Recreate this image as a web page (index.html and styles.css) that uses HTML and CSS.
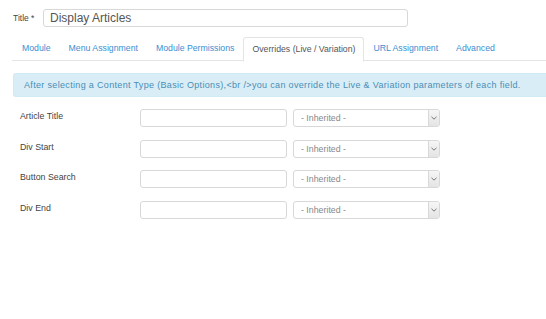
FILE: index.html
```html
<!DOCTYPE html>
<html lang="en">
<head>
    <meta charset="UTF-8">
    <title>Display Articles</title>
    <link rel="stylesheet" href="styles.css">
</head>
<body>

    <div class="title-row">
        <label for="title">Title *</label>
        <input type="text" id="title" class="title-input" value="Display Articles">
    </div>

    <ul class="tabs">
        <li>Module</li>
        <li>Menu Assignment</li>
        <li>Module Permissions</li>
        <li class="active">Overrides (Live / Variation)</li>
        <li>URL Assignment</li>
        <li>Advanced</li>
    </ul>

    <div class="alert">After selecting a Content Type (Basic Options),&lt;br /&gt;you can override the Live &amp; Variation parameters of each field.</div>

    <div class="fields">
        <div class="field">
            <label>Article Title</label>
            <input type="text" class="box">
            <div class="select"><span>- Inherited -</span><span class="arrow"><svg width="6" height="4" viewBox="0 0 6 4"><path d="M0.5 0.8 L3 3.2 L5.5 0.8" fill="none" stroke="#777" stroke-width="1"/></svg></span></div>
        </div>
        <div class="field">
            <label>Div Start</label>
            <input type="text" class="box">
            <div class="select"><span>- Inherited -</span><span class="arrow"><svg width="6" height="4" viewBox="0 0 6 4"><path d="M0.5 0.8 L3 3.2 L5.5 0.8" fill="none" stroke="#777" stroke-width="1"/></svg></span></div>
        </div>
        <div class="field">
            <label>Button Search</label>
            <input type="text" class="box">
            <div class="select"><span>- Inherited -</span><span class="arrow"><svg width="6" height="4" viewBox="0 0 6 4"><path d="M0.5 0.8 L3 3.2 L5.5 0.8" fill="none" stroke="#777" stroke-width="1"/></svg></span></div>
        </div>
        <div class="field">
            <label>Div End</label>
            <input type="text" class="box">
            <div class="select"><span>- Inherited -</span><span class="arrow"><svg width="6" height="4" viewBox="0 0 6 4"><path d="M0.5 0.8 L3 3.2 L5.5 0.8" fill="none" stroke="#777" stroke-width="1"/></svg></span></div>
        </div>
    </div>

</body>
</html>
```

FILE: styles.css
```css
body {
    font-family: "Liberation Sans", Arial, sans-serif;
    background-color: #fff;
    color: #444;
    margin: 0;
    padding: 0;
    font-size: 8.8px;
}
.title-row {
    display: flex;
    align-items: center;
    padding: 9px 0 0 13px;
}
.title-row label {
    width: 30px;
    font-size: 8.5px;
    color: #444;
}
.title-input {
    box-sizing: border-box;
    width: 365px;
    height: 18px;
    padding: 0 6px;
    border: 1px solid #d8d8d8;
    border-radius: 3px;
    font-family: inherit;
    font-size: 12px;
    color: #555;
    outline: none;
}
.tabs {
    display: flex;
    list-style: none;
    margin: 10px 0 0 12px;
    padding: 0 0 0 1px;
    border-bottom: 1px solid #e4e4e4;
    height: 23px;
    font-size: 8.72px;
}
.tabs li {
    padding: 0 9px;
    line-height: 23px;
    color: #3a8fd2;
    white-space: nowrap;
}
.tabs li.active {
    color: #555;
    background-color: #fff;
    border: 1px solid #e4e4e4;
    border-bottom-color: #fff;
    border-radius: 3px 3px 0 0;
    padding: 0 8px;
    line-height: 22px;
    height: 23px;
}
.alert {
    margin: 12px 0 0 13px;
    height: 24px;
    line-height: 23px;
    padding-left: 10px;
    background-color: #d9edf7;
    border: 1px solid #d2eaf5;
    border-right: none;
    border-radius: 3px 0 0 3px;
    color: #4a8db5;
    font-size: 9px;
    letter-spacing: 0.33px;
    white-space: nowrap;
    overflow: hidden;
    box-sizing: border-box;
}
.fields {
    padding: 12px 0 0 20px;
}
.field {
    display: flex;
    align-items: flex-start;
    margin-bottom: 12.6px;
}
.field label {
    width: 120px;
    padding-top: 2px;
    color: #444;
}
.box {
    box-sizing: border-box;
    width: 147px;
    height: 18px;
    border: 1px solid #d8d8d8;
    border-radius: 3px;
    outline: none;
    margin: 0;
}
.select {
    box-sizing: border-box;
    display: flex;
    align-items: center;
    justify-content: space-between;
    width: 147px;
    height: 18px;
    margin-left: 6px;
    border: 1px solid #d8d8d8;
    border-radius: 3px;
    color: #888;
    padding-left: 7px;
    overflow: hidden;
}
.arrow {
    display: flex;
    align-items: center;
    justify-content: center;
    width: 10px;
    height: 100%;
    background: linear-gradient(#f6f6f6, #e4e4e4);
    border-left: 1px solid #d8d8d8;
}
```
